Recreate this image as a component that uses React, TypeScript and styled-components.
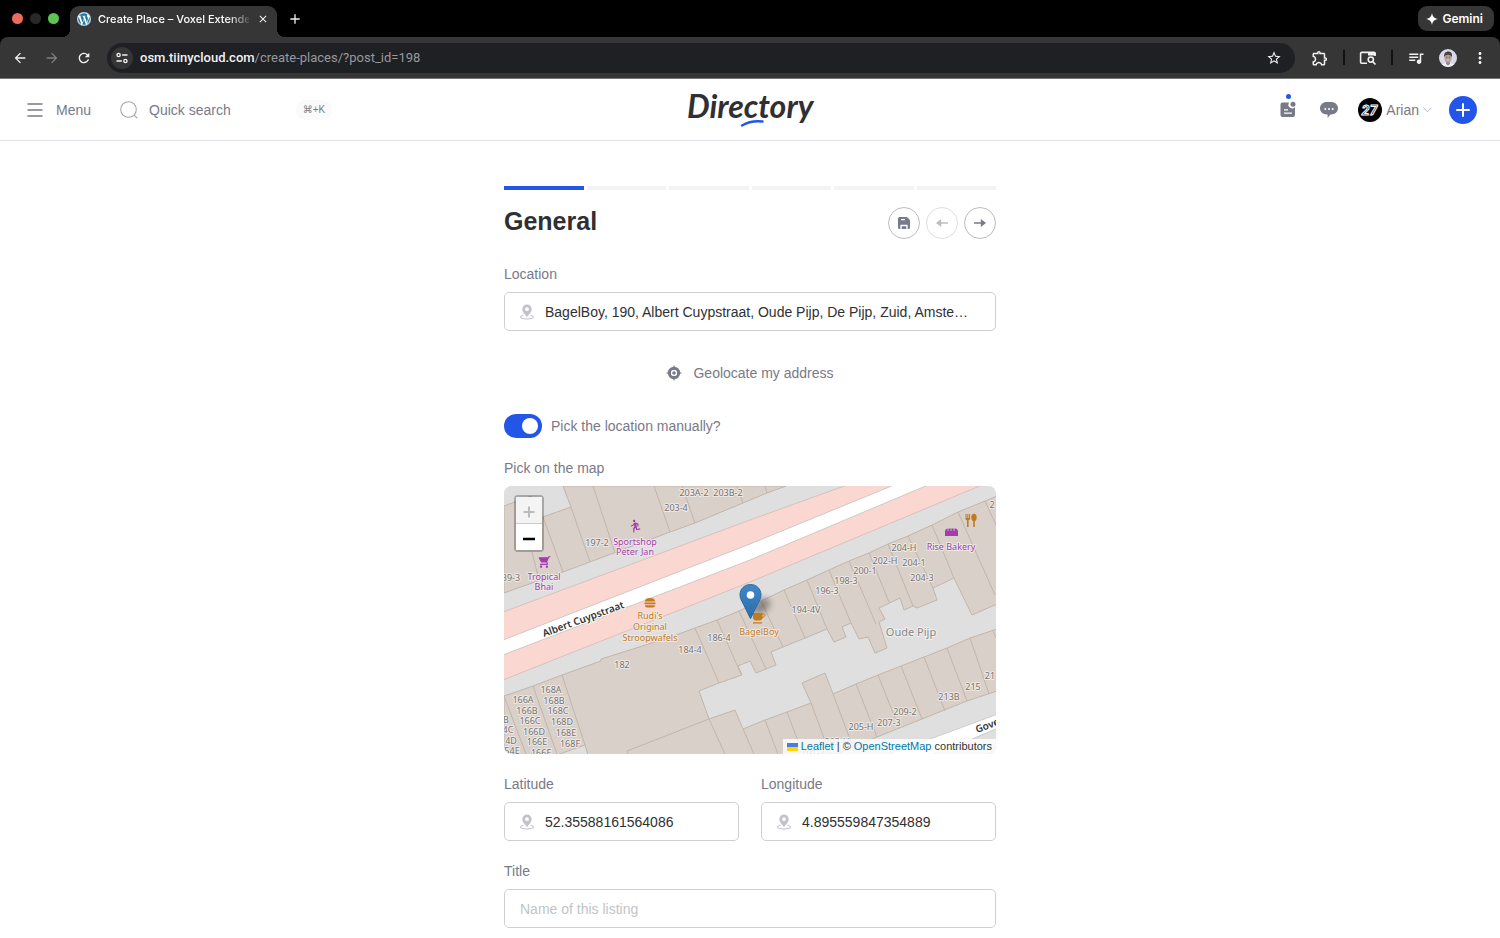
import React, { useState } from "react";
import styled, { createGlobalStyle } from "styled-components";
import {
  MdArrowBack,
  MdArrowForward,
  MdRefresh,
  MdStarBorder,
  MdOutlineExtension,
  MdQueueMusic,
  MdMoreVert,
  MdClose,
  MdAdd,
  MdDirectionsRun,
  MdShoppingCart,
} from "react-icons/md";
import { FaWordpress } from "react-icons/fa";

const color = {
  accent: "#2356e8",
  text: "#2f3033",
  muted: "#797a88",
  line: "#cfcfd2",
  chrome: "#363636",
  field: "#1f2024",
};

const GlobalStyle = createGlobalStyle`
  * { box-sizing: border-box; }
  body {
    margin: 0;
    background: #fff;
    color: ${color.text};
    font-family: "Liberation Sans", Arial, sans-serif;
    font-size: 14px;
    line-height: 20px;
  }
  button, input { font: inherit; color: inherit; }
  button { padding: 0; border: 0; background: none; cursor: pointer; }
  svg { display: block; flex: none; }
  a { text-decoration: none; }
`;

/* ---------- browser window ---------- */

const Chrome = styled.div`
  background: #000;
  font-family: Inter, sans-serif;
`;

const TabStrip = styled.div`
  display: flex;
  align-items: center;
  height: 37px;
  padding: 0 6px 0 12px;
`;

const Lights = styled.div`
  display: flex;
  gap: 7px;
  margin-right: 11px;
`;

const Light = styled.span<{ $fill: string }>`
  width: 11px;
  height: 11px;
  border-radius: 50%;
  background: ${(p) => p.$fill};
`;

const Tab = styled.div`
  position: relative;
  display: flex;
  align-items: center;
  align-self: flex-end;
  width: 207px;
  height: 31px;
  padding: 0 8px 6px 7px;
  border-radius: 9px 9px 0 0;
  background: ${color.chrome};
  color: #fff;

  &::before,
  &::after {
    content: "";
    position: absolute;
    bottom: 0;
    width: 8px;
    height: 8px;
  }
  &::before {
    right: 100%;
    background: radial-gradient(circle at 0 0, transparent 8px, ${color.chrome} 8px);
  }
  &::after {
    left: 100%;
    background: radial-gradient(circle at 100% 0, transparent 8px, ${color.chrome} 8px);
  }
`;

const Favicon = styled.span`
  display: flex;
  margin-right: 7px;
  border-radius: 50%;
  background: #fff;
  color: #21759b;
`;

const TabTitle = styled.span`
  flex: 1;
  margin-right: 8px;
  overflow: hidden;
  white-space: nowrap;
  font-size: 11px;
  font-weight: 500;
  mask-image: linear-gradient(to right, #000 86%, rgba(0, 0, 0, 0.15));
`;

const ChromeButton = styled.button<{ $dim?: boolean }>`
  display: flex;
  align-items: center;
  justify-content: center;
  color: ${(p) => (p.$dim ? "#808080" : "#f1f1f1")};
`;

const NewTab = styled(ChromeButton)`
  margin-left: 10px;
`;

const Gemini = styled.button`
  display: flex;
  align-items: center;
  gap: 4px;
  height: 25px;
  margin-left: auto;
  padding: 0 11px 0 8px;
  border-radius: 9px;
  background: ${color.chrome};
  color: #fff;
  font-size: 12px;
  font-weight: 600;
`;

const Toolbar = styled.div`
  display: flex;
  align-items: center;
  height: 42px;
  padding: 0 11px 0 12px;
  border-bottom: 1px solid #777;
  border-radius: 8px 8px 0 0;
  background: ${color.chrome};
`;

const NavButtons = styled.div`
  display: flex;
  gap: 16px;
  margin-right: 15px;
`;

const Address = styled.div`
  display: flex;
  align-items: center;
  flex: 1;
  height: 30px;
  padding: 0 13px 0 4px;
  border-radius: 15px;
  background: ${color.field};
  color: #f1f1f1;
`;

const SiteInfo = styled(ChromeButton)`
  width: 22px;
  height: 22px;
  margin-right: 7px;
  border-radius: 50%;
  background: ${color.chrome};
`;

const Url = styled.span`
  flex: 1;
  color: #98999c;
  font-family: Roboto, sans-serif;
  font-size: 13px;

  b {
    color: #f1f1f1;
    font-weight: 500;
  }
`;

const Tools = styled.div`
  display: flex;
  align-items: center;
  gap: 14px;
  margin-left: 16px;
`;

const Divider = styled.span`
  width: 2px;
  height: 15px;
  background: #111;
`;

/* ---------- site header ---------- */

const Header = styled.header`
  display: grid;
  grid-template-columns: 1fr auto 1fr;
  align-items: center;
  height: 62px;
  padding: 0 23px 0 27px;
  border-bottom: 1px solid #e1e1e8;
  color: ${color.muted};
`;

const HeaderSide = styled.div<{ $end?: boolean }>`
  display: flex;
  align-items: center;
  gap: ${(p) => (p.$end ? "17px" : "29px")};
  justify-content: ${(p) => (p.$end ? "flex-end" : "flex-start")};
`;

const HeaderButton = styled.button<{ $gap: number }>`
  position: relative;
  display: flex;
  align-items: center;
  gap: ${(p) => p.$gap}px;
`;

const Shortcut = styled.kbd`
  margin-left: 54px;
  padding: 0 7px;
  border-radius: 10px;
  background: #fafafa;
  font-family: "Liberation Sans", "DejaVu Sans", sans-serif;
  font-size: 10px;
`;

const IconButton = styled(HeaderButton)`
  justify-content: center;
  width: 24px;
  height: 28px;
`;

const Dot = styled.span`
  position: absolute;
  top: -2px;
  left: 10px;
  width: 5px;
  height: 5px;
  border-radius: 50%;
  background: ${color.accent};
`;

const AddButton = styled.button`
  display: flex;
  align-items: center;
  justify-content: center;
  width: 28px;
  height: 28px;
  border-radius: 50%;
  background: ${color.accent};
  color: #fff;
`;

/* ---------- form ---------- */

const Form = styled.form`
  display: flex;
  flex-direction: column;
  gap: 20px;
  max-width: 492px;
  margin: 0 auto;
  padding: 45px 0 8px;
`;

const FormHead = styled.div`
  display: grid;
  gap: 17px;
  margin-bottom: 5px;
`;

const Progress = styled.div`
  display: grid;
  grid-template-columns: repeat(6, 1fr);
  gap: 3px;
`;

const Step = styled.span<{ $active?: boolean }>`
  height: 4px;
  background: ${(p) => (p.$active ? color.accent : "#f3f3f3")};
`;

const TitleRow = styled.div`
  display: flex;
  justify-content: space-between;
`;

const Title = styled.h1`
  margin: 0;
  font-size: 25px;
  line-height: 29px;
`;

const StepButtons = styled.div`
  display: flex;
  gap: 6px;
`;

const RoundButton = styled.button`
  display: flex;
  align-items: center;
  justify-content: center;
  width: 32px;
  height: 32px;
  border: 1px solid #bdbdc2;
  border-radius: 50%;
  color: ${color.muted};

  &:disabled {
    opacity: 0.5;
  }
`;

const Field = styled.div`
  display: grid;
  grid-template-columns: minmax(0, 1fr);
  gap: 8px;
`;

const Label = styled.label`
  color: ${color.muted};
`;

const InputBox = styled.div`
  display: flex;
  align-items: center;
  gap: 11px;
  height: 39px;
  padding: 0 24px 0 15px;
  border: 1px solid ${color.line};
  border-radius: 5px;
  color: #c2c3c7;
`;

const Input = styled.input`
  flex: 1;
  min-width: 0;
  height: 100%;
  padding: 0;
  border: 0;
  outline: 0;
  background: none;
  color: ${color.text};
  text-overflow: ellipsis;

  &::placeholder {
    color: #c2c3c7;
    opacity: 1;
  }
`;

const Columns = styled.div`
  display: grid;
  grid-template-columns: 1fr 1fr;
  gap: 22px;
`;

const Geolocate = styled.button`
  display: flex;
  align-items: center;
  justify-content: center;
  gap: 11px;
  height: 43px;
  color: ${color.muted};
`;

const SwitchRow = styled.label`
  display: flex;
  align-items: center;
  gap: 9px;
  color: ${color.muted};
`;

const Switch = styled.input`
  display: flex;
  align-items: center;
  appearance: none;
  width: 38px;
  height: 24px;
  margin: 0;
  padding: 0 4px;
  border-radius: 12px;
  background: #c8c8ce;
  cursor: pointer;

  &::before {
    content: "";
    width: 16px;
    height: 16px;
    border-radius: 50%;
    background: #fff;
  }
  &:checked {
    justify-content: flex-end;
    background: ${color.accent};
  }
`;

/* ---------- map ---------- */

const MapFrame = styled.div`
  position: relative;
  height: 268px;
  overflow: hidden;
  border-radius: 8px;
  background: #dfdfdf;
`;

const MapCanvas = styled.svg`
  width: 100%;
  height: 100%;
  font-family: "Noto Sans", sans-serif;
`;

const ZoomControl = styled.div`
  position: absolute;
  top: 9px;
  left: 10px;
  display: grid;
  border: 2px solid rgba(0, 0, 0, 0.25);
  border-radius: 4px;
  background-clip: padding-box;
`;

const ZoomButton = styled.button`
  display: flex;
  align-items: center;
  justify-content: center;
  width: 26px;
  height: 26px;
  padding-top: 3px;
  background: #fff;
  color: #000;

  &:disabled {
    height: 27px;
    border-bottom: 1px solid #ccc;
    background: #f4f4f4;
    color: #bbb;
  }
`;

const Attribution = styled.div`
  position: absolute;
  right: 0;
  bottom: 0;
  display: flex;
  align-items: center;
  gap: 3px;
  padding: 0 4px;
  background: rgba(255, 255, 255, 0.8);
  color: #333;
  font-size: 11px;
  line-height: 15px;
  white-space: nowrap;

  a {
    color: #0078a8;
  }
`;

const SiteInfoIcon = () => (
  <svg width="14" height="14" viewBox="0 0 14 14" fill="none" stroke="currentColor" strokeWidth="1.4" strokeLinecap="round">
    <circle cx="3.6" cy="4" r="1.6" />
    <path d="M7.6 4H12M2 10h4.4" />
    <circle cx="10.4" cy="10" r="1.6" />
  </svg>
);

const LensIcon = () => (
  <svg width="18" height="16" viewBox="0 0 18 16" fill="none" stroke="currentColor" strokeWidth="1.6">
    <path d="M8 13.2H2.6a1 1 0 0 1-1-1V3.4a1 1 0 0 1 1-1H15a1 1 0 0 1 1 1V6" />
    <path d="M9 2h6.4c.8 0 1.4.6 1.4 1.4v2.1H9z" fill="currentColor" stroke="none" />
    <circle cx="11.8" cy="9.6" r="2.6" />
    <path d="M13.7 11.6l2.8 2.9" />
  </svg>
);

const ProfilePhoto = () => (
  <svg width="18" height="18" viewBox="0 0 18 18">
    <defs>
      <clipPath id="photo">
        <circle cx="9" cy="9" r="9" />
      </clipPath>
    </defs>
    <g clipPath="url(#photo)">
      <path d="M0 0h18v18H0z" fill="#d8d9e8" />
      <path d="M2 18c1-3.500 3.500-4 7-4s6 .5 7 4z" fill="#f2f2f8" />
      <path d="M7 11.500h4V15L9 16.500 7 15z" fill="#9f8684" />
      <ellipse cx="9" cy="8.800" rx="3.500" ry="4.600" fill="#b69c99" />
      <path d="M5.200 8.500C4.500 4.500 6.500 2.500 9.200 2.500s4.500 2 3.700 6C12.300 6.700 11.500 5.800 9 5.800S5.800 6.700 5.200 8.500z" fill="#4b4145" />
      <path d="M7.200 8.300h1.200M9.800 8.300H11" stroke="#54454a" strokeWidth=".7" />
      <path d="M7.300 10.800q1.700 1.600 3.400 0z" fill="#fff" />
    </g>
  </svg>
);

const Logo = () => (
  <svg width="130" height="48" viewBox="0 0 130 48" role="img" aria-label="Directory">
    <text x="0" y="32" fill="#2f3033" fontFamily="Lato, sans-serif" fontSize="32" fontWeight="700" fontStyle="italic">
      Directory
    </text>
    <path d="M55 39.500c6-3.500 13-5 20.500-4" fill="none" stroke={color.accent} strokeWidth="2.400" strokeLinecap="round" />
  </svg>
);

const PostsIcon = () => (
  <svg width="16" height="17" viewBox="0 0 16 17" fill="currentColor">
    <path fillRule="evenodd" d="M2.500 1.500h6.700a3.600 3.600 0 0 0 5.800 4.400V14a2 2 0 0 1-2 2H2.500a2 2 0 0 1-2-2V3.500a2 2 0 0 1 2-2zM4 8.300v1.300h4V8.300zm0 3.200v1.300h8v-1.300z" />
    <circle cx="13" cy="3.200" r="2.500" />
  </svg>
);

const ChatIcon = () => (
  <svg width="18" height="18" viewBox="0 0 18 18">
    <path d="M7 1h4c4 0 7 2.600 7 6.200s-3 6.200-7 6.200h-.6L7.600 17v-3.600H7c-4 0-7-2.600-7-6.200S3 1 7 1z" fill="currentColor" />
    <g fill="#fff">
      <circle cx="5.300" cy="8" r="1" />
      <circle cx="9" cy="8" r="1" />
      <circle cx="12.700" cy="8" r="1" />
    </g>
  </svg>
);

const Avatar = () => (
  <svg width="24" height="24" viewBox="0 0 24 24" role="img" aria-label="27">
    <circle cx="12" cy="12" r="12" fill="#000" />
    <text x="11.500" y="17" textAnchor="middle" fontFamily="Lato, sans-serif" fontSize="14" fontWeight="900" fontStyle="italic" fill="#000" stroke="#fff" strokeWidth="1">
      27
    </text>
  </svg>
);

const SaveIcon = () => (
  <svg width="12" height="12" viewBox="0 0 12 12" fill="currentColor">
    <path fillRule="evenodd" d="M1.500 0H9l3 3v7.500a1.500 1.500 0 0 1-1.500 1.500H9.700V8.600a.9.9 0 0 0-.9-.9H3.200a.9.900 0 0 0-.9.900V12h-.8A1.500 1.500 0 0 1 0 10.500v-9A1.500 1.500 0 0 1 1.500 0zM3 2v1.300h4V2z" />
    <path d="M3.700 9.200h4.600V12H3.700z" />
  </svg>
);

const StepArrow = ({ back }: { back?: boolean }) => (
  <svg width="12" height="10" viewBox="0 0 12 10">
    <g transform={back ? "matrix(-1 0 0 1 12 0)" : undefined}>
      <path d="M0.500 5H8" stroke="currentColor" strokeWidth="1.500" strokeLinecap="round" />
      <path d="M6.800 1v8L12 5z" fill="currentColor" />
    </g>
  </svg>
);

const PinIcon = () => (
  <svg width="14" height="16" viewBox="0 0 14 16" fill="currentColor">
    <path fillRule="evenodd" d="M7 .5a4.700 4.700 0 0 1 4.700 4.700C11.700 8.500 8.500 10.500 7 13.200 5.500 10.500 2.300 8.500 2.300 5.200A4.700 4.700 0 0 1 7 .5zM7 3.300a1.900 1.900 0 1 0 0 3.800 1.900 1.900 0 0 0 0-3.800z" />
    <path d="M3.400 11.300C1.800 11.700.6 12.300.6 13.100c0 1.100 2.800 1.900 6.400 1.900s6.400-.8 6.400-1.900c0-.8-1.200-1.400-2.800-1.800" fill="none" stroke="currentColor" strokeWidth="1.100" />
  </svg>
);

const TargetIcon = () => (
  <svg width="16" height="16" viewBox="0 0 16 16" fill="none" stroke="currentColor">
    <path d="M8 .5v15M.5 8h15" strokeWidth="1.200" />
    <circle cx="8" cy="8" r="4.600" strokeWidth="3.200" />
    <circle cx="8" cy="8" r="3" fill="#fff" stroke="none" />
    <circle cx="8" cy="8" r="1.800" fill="currentColor" stroke="none" />
  </svg>
);

/* ---------- map drawing ---------- */

const buildings = [
  "504,506 531,496 540,518 571,507 563,486 786,486 767,493 743,503 695,523 670,532 563,572 504,593",
  "504,696 533,686 562,675 601,661 601,659 633,649 676,635 695,628 717,620 739,611 761,601 784,590 807,580 829,570 849,561 869,553 888,544 908,536 932,525 958,512 985,501 997,496 997,604 972,615 954,578 933,588 937,600 917,608 913,606 904,610 900,598 879,608 885,619 879,622 887,648 875,653 868,637 859,639 851,623 842,627 846,637 834,642 827,629 783,647 771,652 776,665 756,673 750,661 738,666 742,675 719,683 699,691 709,719 735,710 743,729 765,720 787,712 811,703 802,683 825,673 833,694 856,684 878,675 901,666 924,657 947,648 970,638 997,629 997,691 967,701 922,719 877,737 835,755 588,755 585,745 557,755 504,755",
];

const walls =
  "M543 517L563 572M532 552L539 580M571 507L590 562M593 486L615 553M654 486L670 532M682 486L695 523M737 486L743 503M765 486L767 493" +
  "M504 696L526 754M533 686L557 754M562 675L585 745M695 628L719 683M717 620L741 674M739 611L766 669M761 601L783 647M784 590L805 638" +
  "M807 580L827 629M829 570L851 623M849 561L876 624M869 553L889 602M888 544L913 606M908 536L933 588M932 525L954 578M958 512L995 595M985 501L997 527" +
  "M709 719L627 751L628 754M709 719L725 754M743 729L754 754M765 720L778 754M787 712L803 754M811 703L830 754M833 694L853 747" +
  "M856 684L877 737M878 675L899 728M901 666L922 719M924 657L945 711M947 648L967 701M970 638L989 694M993 631L997 640";

type MapText = [x: number, y: number, text: string];

const houseNumbers: MapText[] = [
  [694, 496, "203A-2"], [728, 496, "203B-2"], [676, 511, "203-4"], [597, 546, "197-2"], [511, 581, "39-3"],
  [904, 551, "204-H"], [885, 564, "202-H"], [914, 566, "204-1"], [865, 574, "200-1"], [922, 581, "204-3"],
  [846, 584, "198-3"], [827, 594, "196-3"], [806, 613, "194-4V"], [719, 641, "186-4"], [690, 653, "184-4"],
  [622, 668, "182"], [551, 693, "168A"], [554, 704, "168B"], [558, 714, "168C"], [562, 725, "168D"],
  [566, 736, "168E"], [570, 747, "168F"], [523, 703, "166A"], [527, 714, "166B"], [530, 724, "166C"],
  [534, 735, "166D"], [537, 745, "166E"], [541, 756, "166F"], [506, 723, "B"], [508, 733, "4C"], [511, 744, "4D"],
  [512, 754, "54E"], [861, 730, "205-H"], [889, 726, "207-3"], [905, 715, "209-2"], [949, 700, "213B"],
  [973, 690, "215"], [990, 679, "21"], [992, 508, "2"], [837, 745, "203-H"], [813, 756, "201-2"],
];

const shops: MapText[] = [
  [635, 545, "Sportshop"], [635, 555, "Peter Jan"], [544, 580, "Tropical"], [544, 590, "Bhai"], [951, 550, "Rise Bakery"],
];

const cafes: MapText[] = [
  [650, 619, "Rudi's"], [650, 630, "Original"], [650, 641, "Stroopwafels"], [759, 635, "BagelBoy"],
];

const Labels = ({ items, fill, halo = "#eee9e6" }: { items: MapText[]; fill: string; halo?: string }) => (
  <g fill={fill} stroke={halo} strokeWidth="2" strokeLinejoin="round" paintOrder="stroke" textAnchor="middle" fontSize="9">
    {items.map(([x, y, text]) => (
      <text key={text} x={x} y={y}>
        {text}
      </text>
    ))}
  </g>
);

const StreetMap = () => (
  <MapCanvas viewBox="504 486 492 268" preserveAspectRatio="xMidYMid slice" role="img" aria-label="Map of Albert Cuypstraat">
    <defs>
      <linearGradient id="marker" x1="0" y1="0" x2="0" y2="1">
        <stop offset="0" stopColor="#4088c9" />
        <stop offset="1" stopColor="#2b6bab" />
      </linearGradient>
      <filter id="soft" x="-50%" y="-50%" width="200%" height="200%">
        <feGaussianBlur stdDeviation="3" />
      </filter>
    </defs>
    <path d="M504 486h492v268H504z" fill="#dfdfdf" />
    <g fill="#d9d0c9" stroke="#c2b5aa" strokeWidth="1">
      {buildings.map((points) => (
        <polygon key={points} points={points} />
      ))}
      <path d={walls} fill="none" />
    </g>
    <path d="M503 612L750 520L847 485H982L750 582L503 680z" fill="#fad7d0" stroke="#d9c0bc" strokeWidth="1" />
    <path d="M503 640L750 544L894 485H928L750 560L503 655z" fill="#fff" stroke="#d0c8c5" strokeWidth="1" />
    <path d="M886 755L930 739L998 714V728L970 740L930 755z" fill="#fff" stroke="#ccc" strokeWidth="1" />

    <Labels items={houseNumbers} fill="#77716d" />
    <Labels items={shops} fill="#a23bac" />
    <Labels items={cafes} fill="#c27a1c" />
    <text x="911" y="636" textAnchor="middle" fontSize="11" fill="#858585" stroke="#f0f0f0" strokeWidth="2" paintOrder="stroke">
      Oude Pijp
    </text>
    <g fill="#333" stroke="#fff" strokeWidth="2" paintOrder="stroke" fontSize="10" fontWeight="600">
      <text transform="translate(544 637) rotate(-20)">Albert Cuypstraat</text>
      <text transform="translate(977 733) rotate(-20)">Govert</text>
    </g>

    <g color="#a23bac">
      <g transform="matrix(-1 0 0 1 1270 0)">
        <MdDirectionsRun x="628" y="519" width="15" height="15" />
      </g>
      <g transform="matrix(-1 0 0 1 1087 0)">
        <MdShoppingCart x="536" y="555" width="14" height="14" />
      </g>
      <path d="M945 536v-4c0-2 1-3.500 3-3.500h7c2 0 3 1.500 3 3.500v4z" fill="currentColor" />
      <path d="M948 528v3M951 528v3M954 528v3" stroke="#d9d0c9" strokeWidth=".8" />
    </g>
    <g fill="#c27a1c">
      <path d="M645 601.500c0-2.500 1.500-3.500 5-3.500s5 1 5 3.500zM644.500 602.500h11v1.800h-11zM645 605.300h10c0 1.700-.8 2.200-2 2.200h-6c-1.200 0-2-.5-2-2.200z" />
      <path d="M965.500 514v4.500c0 1 .6 1.600 1.500 1.800V527h1.600v-6.700c.9-.2 1.500-.8 1.500-1.800V514h-1v4h-.7v-4h-1.100v4h-.8v-4z" />
      <ellipse cx="974" cy="517.500" rx="2.700" ry="3.700" />
      <path d="M973.200 520h1.600v7h-1.600z" />
    </g>

    <ellipse cx="761" cy="606" rx="10" ry="7" transform="rotate(-35 761 606)" fill="#000" opacity=".35" filter="url(#soft)" />
    <g fill="#c27a1c">
      <path d="M753 613h9.500v4.500c0 2-1.300 3-3 3h-3.500c-1.700 0-3-1-3-3zM753 622.300h9v1.200h-9z" />
      <path d="M762 614h1.500c2.600 0 1.500 3.500-2 3.500" fill="none" stroke="#c27a1c" />
    </g>
    <path d="M750.500 584.500c6 0 10.500 4.500 10.500 10.300 0 3.700-1.700 6.200-3.300 9.200l-7.200 14.700-7.200-14.700c-1.600-3-3.300-5.500-3.300-9.200 0-5.800 4.500-10.300 10.500-10.300z" fill="url(#marker)" stroke="#2e6c97" />
    <circle cx="750.500" cy="595" r="3.800" fill="#fff" />
  </MapCanvas>
);

const LocationMap = () => (
  <MapFrame>
    <StreetMap />
    <ZoomControl>
      <ZoomButton type="button" aria-label="Zoom in" disabled>
        <svg width="12" height="12" viewBox="0 0 12 12" stroke="currentColor" strokeWidth="2">
          <path d="M6 .5v11M.5 6h11" />
        </svg>
      </ZoomButton>
      <ZoomButton type="button" aria-label="Zoom out">
        <svg width="12" height="12" viewBox="0 0 12 12" stroke="currentColor" strokeWidth="2.400">
          <path d="M0 6h12" />
        </svg>
      </ZoomButton>
    </ZoomControl>
    <Attribution>
      <svg width="11" height="8" viewBox="0 0 11 8">
        <path d="M0 0h11v4H0z" fill="#4c7be1" />
        <path d="M0 4h11v4H0z" fill="#ffd500" />
      </svg>
      <span>
        <a href="#leaflet">Leaflet</a> | © <a href="#osm">OpenStreetMap</a> contributors
      </span>
    </Attribution>
  </MapFrame>
);

const BrowserBar = () => (
  <Chrome>
    <TabStrip>
      <Lights>
        <Light $fill="#ed6a5f" />
        <Light $fill="#282828" />
        <Light $fill="#5fc454" />
      </Lights>
      <Tab>
        <Favicon>
          <FaWordpress size={14} />
        </Favicon>
        <TabTitle>Create Place – Voxel Extended</TabTitle>
        <ChromeButton aria-label="Close tab">
          <MdClose size={12} />
        </ChromeButton>
      </Tab>
      <NewTab aria-label="New tab">
        <MdAdd size={16} />
      </NewTab>
      <Gemini>
        <svg width="12" height="12" viewBox="0 0 12 12" fill="currentColor">
          <path d="M6 0c.6 3.700 2.300 5.400 6 6-3.700.6-5.400 2.300-6 6-.6-3.700-2.300-5.400-6-6 3.700-.6 5.400-2.300 6-6z" />
        </svg>
        Gemini
      </Gemini>
    </TabStrip>
    <Toolbar>
      <NavButtons>
        <ChromeButton aria-label="Back">
          <MdArrowBack size={16} />
        </ChromeButton>
        <ChromeButton aria-label="Forward" $dim>
          <MdArrowForward size={16} />
        </ChromeButton>
        <ChromeButton aria-label="Reload">
          <MdRefresh size={16} />
        </ChromeButton>
      </NavButtons>
      <Address>
        <SiteInfo aria-label="Site information">
          <SiteInfoIcon />
        </SiteInfo>
        <Url>
          <b>osm.tiinycloud.com</b>/create-places/?post_id=198
        </Url>
        <ChromeButton aria-label="Bookmark">
          <MdStarBorder size={16} />
        </ChromeButton>
      </Address>
      <Tools>
        <ChromeButton aria-label="Extensions">
          <MdOutlineExtension size={18} />
        </ChromeButton>
        <Divider />
        <ChromeButton aria-label="Search with Lens">
          <LensIcon />
        </ChromeButton>
        <Divider />
        <ChromeButton aria-label="Media">
          <MdQueueMusic size={18} />
        </ChromeButton>
        <ChromeButton aria-label="Profile">
          <ProfilePhoto />
        </ChromeButton>
        <ChromeButton aria-label="More">
          <MdMoreVert size={18} />
        </ChromeButton>
      </Tools>
    </Toolbar>
  </Chrome>
);

const SiteHeader = () => (
  <Header>
    <HeaderSide>
      <HeaderButton $gap={13}>
        <svg width="16" height="14" viewBox="0 0 16 14" stroke="currentColor" strokeWidth="1.500" strokeLinecap="round">
          <path d="M1 1h14M1 7h14M1 13h14" />
        </svg>
        Menu
      </HeaderButton>
      <HeaderButton $gap={11}>
        <svg width="18" height="18" viewBox="0 0 18 18" fill="none" stroke="#a3a4b4" strokeWidth="1.100" strokeLinecap="round">
          <circle cx="8.500" cy="8.500" r="7.800" />
          <path d="M14.300 14.300L17 17" />
        </svg>
        Quick search
        <Shortcut>⌘+K</Shortcut>
      </HeaderButton>
    </HeaderSide>
    <a href="#home" aria-label="Directory">
      <Logo />
    </a>
    <HeaderSide $end>
      <IconButton $gap={0} aria-label="Posts">
        <PostsIcon />
        <Dot />
      </IconButton>
      <IconButton $gap={0} aria-label="Messages">
        <ChatIcon />
      </IconButton>
      <HeaderButton $gap={4}>
        <Avatar />
        Arian
        <svg width="9" height="6" viewBox="0 0 9 6" fill="none" stroke="#b4b5c0" strokeLinecap="round">
          <path d="M.8 1l3.700 3.700L8.200 1" />
        </svg>
      </HeaderButton>
      <AddButton aria-label="Add">
        <svg width="14" height="14" viewBox="0 0 14 14" stroke="currentColor" strokeWidth="2" strokeLinecap="round">
          <path d="M7 1v12M1 7h12" />
        </svg>
      </AddButton>
    </HeaderSide>
  </Header>
);

export default function App() {
  const [manual, setManual] = useState(true);

  return (
    <>
      <GlobalStyle />
      <BrowserBar />
      <SiteHeader />
      <main>
        <Form onSubmit={(e) => e.preventDefault()}>
          <FormHead>
            <Progress>
              <Step $active />
              <Step />
              <Step />
              <Step />
              <Step />
              <Step />
            </Progress>
            <TitleRow>
              <Title>General</Title>
              <StepButtons>
                <RoundButton type="button" aria-label="Save">
                  <SaveIcon />
                </RoundButton>
                <RoundButton type="button" aria-label="Previous step" disabled>
                  <StepArrow back />
                </RoundButton>
                <RoundButton type="button" aria-label="Next step">
                  <StepArrow />
                </RoundButton>
              </StepButtons>
            </TitleRow>
          </FormHead>
          <Field>
            <Label htmlFor="location">Location</Label>
            <InputBox>
              <PinIcon />
              <Input
                id="location"
                defaultValue="BagelBoy, 190, Albert Cuypstraat, Oude Pijp, De Pijp, Zuid, Amsterdam, Noord-Holland"
              />
            </InputBox>
          </Field>
          <Geolocate type="button">
            <TargetIcon />
            Geolocate my address
          </Geolocate>
          <SwitchRow>
            <Switch type="checkbox" checked={manual} onChange={(e) => setManual(e.target.checked)} />
            Pick the location manually?
          </SwitchRow>
          <Field>
            <Label as="span">Pick on the map</Label>
            <LocationMap />
          </Field>
          <Columns>
            <Field>
              <Label htmlFor="latitude">Latitude</Label>
              <InputBox>
                <PinIcon />
                <Input id="latitude" defaultValue="52.35588161564086" />
              </InputBox>
            </Field>
            <Field>
              <Label htmlFor="longitude">Longitude</Label>
              <InputBox>
                <PinIcon />
                <Input id="longitude" defaultValue="4.895559847354889" />
              </InputBox>
            </Field>
          </Columns>
          <Field>
            <Label htmlFor="title">Title</Label>
            <InputBox>
              <Input id="title" placeholder="Name of this listing" />
            </InputBox>
          </Field>
        </Form>
      </main>
    </>
  );
}
